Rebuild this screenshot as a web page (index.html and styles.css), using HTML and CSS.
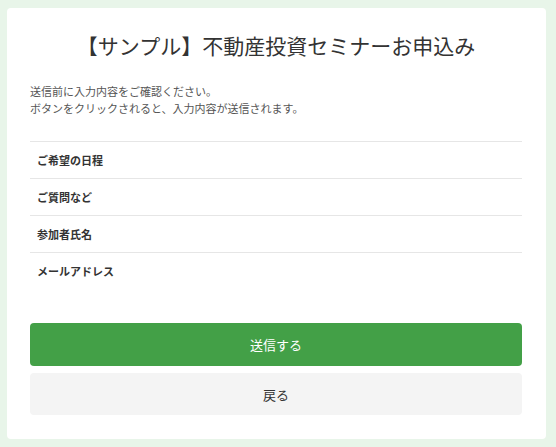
FILE: index.html
```html
<!DOCTYPE html>
<html lang="ja">
<head>
    <meta charset="UTF-8" />
    <meta name="viewport" content="width=device-width, initial-scale=1.0" />
    <title>【サンプル】不動産投資セミナーお申込み</title>
    <link rel="stylesheet" href="styles.css">
</head>
<body>
    <div class="card">
        <h1>【サンプル】不動産投資セミナーお申込み</h1>
        <p class="note">
            送信前に入力内容をご確認ください。<br>
            ボタンをクリックされると、入力内容が送信されます。
        </p>

        <ul class="fields">
            <li>ご希望の日程</li>
            <li>ご質問など</li>
            <li>参加者氏名</li>
            <li>メールアドレス</li>
        </ul>

        <div class="actions">
            <button class="btn btn-send">送信する</button>
            <button class="btn btn-back">戻る</button>
        </div>
    </div>
</body>
</html>
```

FILE: styles.css
```css
* {
    box-sizing: border-box;
    margin: 0;
    padding: 0;
}

body {
    font-family: "Noto Sans CJK JP", "Noto Sans", sans-serif;
    background: #e8f5e9;
    padding: 8px 10px 8px 7px;
    color: #333;
}

.card {
    background: #fff;
    border-radius: 4px;
    padding: 22px 24px 24px 23px;
    min-height: 431px;
}

h1 {
    text-align: center;
    font-size: 21px;
    font-weight: 400;
    line-height: 30px;
    color: #333;
}

.note {
    margin-top: 23px;
    font-size: 11px;
    line-height: 17px;
    color: #555;
}

.fields {
    list-style: none;
    margin-top: 24px;
}

.fields li {
    border-top: 1px solid #e6e6e6;
    padding: 9px 7px;
    font-size: 11px;
    font-weight: 700;
    line-height: 18px;
}

.actions {
    margin-top: 34px;
    display: flex;
    flex-direction: column;
    gap: 7px;
}

.btn {
    border: none;
    border-radius: 4px;
    font-family: inherit;
    font-size: 13px;
    height: 43px;
    cursor: pointer;
}

.btn-send {
    background: #43a047;
    color: #fff;
}

.btn-back {
    background: #f4f4f4;
    color: #333;
    height: 42px;
}
```
